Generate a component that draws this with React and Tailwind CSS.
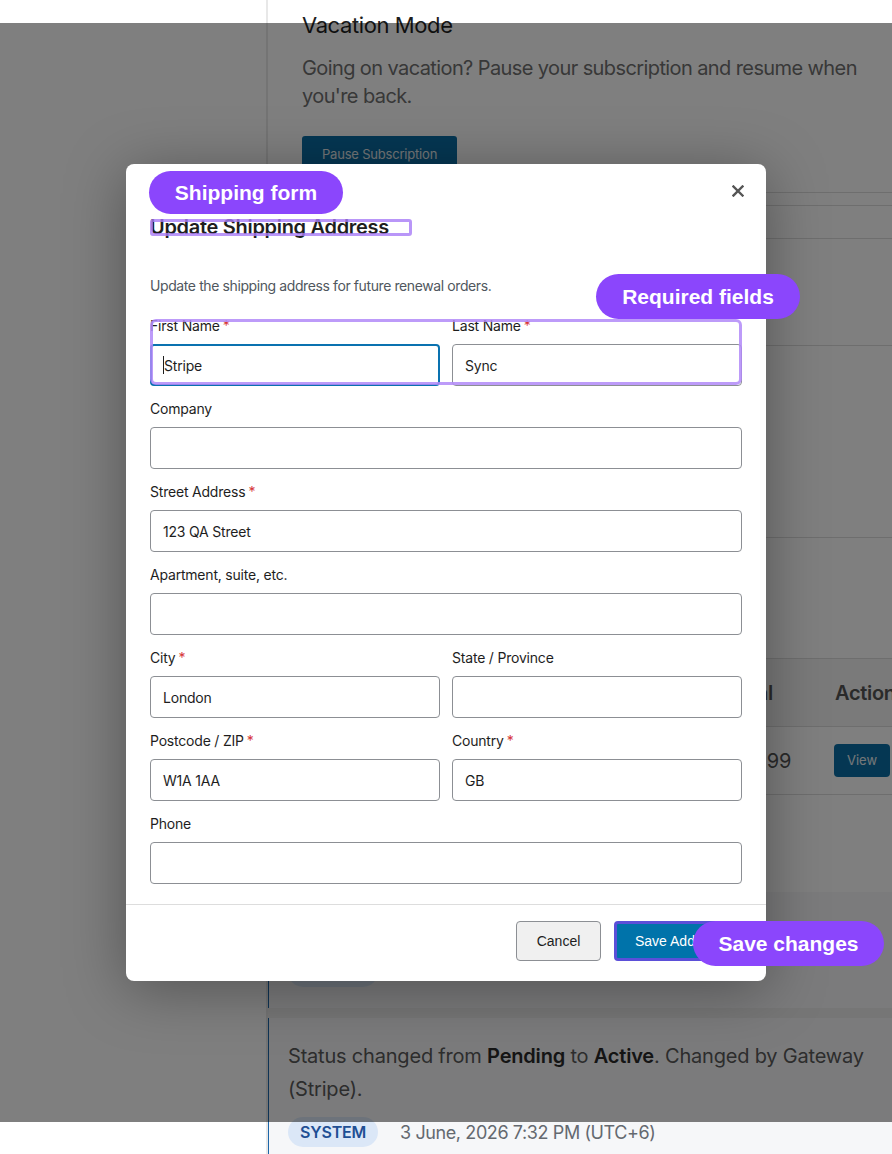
import React from "react";

function Field({ label, required, value, focused, wide }) {
  return (
    <div className={wide ? "col-span-2" : ""}>
      <div className="text-[14px] leading-[21px] text-[#1e1e1e] mb-2 tracking-[-0.2px]">
        {label}
        {required ? <span className="text-[#d63638] ml-[3px]">*</span> : null}
      </div>
      {focused ? (
        <div className="h-[42px] rounded-[4px] border-2 border-[#0a72b0] flex items-center px-[11px] text-[14px] text-[#1e1e1e] tracking-[-0.2px]">
          <span className="inline-block w-px h-[18px] bg-[#1e1e1e]" />
          <span>{value}</span>
        </div>
      ) : (
        <div className="h-[42px] rounded-[4px] border border-[#8c8f94] flex items-center px-3 text-[14px] text-[#1e1e1e] tracking-[-0.2px]">
          {value}
        </div>
      )}
    </div>
  );
}

function Chip() {
  return (
    <span className="inline-flex items-center h-[30px] px-[12px] rounded-[15px] bg-[#dbe7f7] text-[#1f4f94] text-[16px] font-semibold tracking-[-0.2px]">
      SYSTEM
    </span>
  );
}

export default function App() {
  return (
    <div className="relative w-[892px] h-[1154px] overflow-hidden bg-white font-['Inter',sans-serif]">
      {/* Page underneath */}
      <div className="flex h-full">
        <aside className="w-[266px] shrink-0 bg-white" />
        <main className="flex-1 min-w-0 border-l-2 border-[#e8e8e8] bg-white flex flex-col overflow-hidden">
          <section className="h-[193px] shrink-0 pl-[34px] pr-[16px] pt-[12px] border-b border-[#dcdcdc]">
            <h2 className="text-[22px] leading-[26px] text-[#1e1e1e] tracking-[-0.4px]">Vacation Mode</h2>
            <p className="mt-[16px] text-[20px] leading-[28px] text-[#707070] tracking-[-0.6px]">
              Going on vacation? Pause your subscription and resume when you're back.
            </p>
            <button className="mt-[26px] h-[40px] px-[20px] pb-[3px] rounded-[3px] bg-[#0b6fa6] text-[#e8eef2] text-[13px] tracking-[-0.2px]">
              Pause Subscription
            </button>
          </section>
          <div className="h-[13px] shrink-0 border-b border-[#dcdcdc]" />
          <div className="h-[33px] shrink-0 border-b border-[#dcdcdc]" />
          <div className="h-[107px] shrink-0 border-b border-[#dcdcdc]" />
          <div className="h-[192px] shrink-0 border-b border-[#dcdcdc]" />
          <div className="h-[121px] shrink-0 border-b border-[#dcdcdc]" />
          <div className="h-[68px] shrink-0 flex items-center border-b border-[#dcdcdc] bg-[#f4f4f4] whitespace-nowrap">
            <div className="w-[505px] shrink-0 text-right text-[20px] font-semibold text-[#555] tracking-[-0.3px]">Total</div>
            <div className="shrink-0 pl-[62px] text-[20px] font-semibold text-[#555] tracking-[-0.3px]">Actions</div>
          </div>
          <div className="h-[68px] shrink-0 flex items-center border-b border-[#dcdcdc] whitespace-nowrap">
            <div className="w-[523px] shrink-0 text-right text-[20px] text-[#555] tracking-[-0.3px]">$29.99</div>
            <div className="shrink-0 pl-[43px]">
              <button className="h-[33px] px-[13px] rounded-[4px] bg-[#0b6fa6] text-[#e8eef2] text-[13px]">View</button>
            </div>
          </div>
          <div className="h-[97px] shrink-0" />
          <div className="flex-1 bg-[#ececec] -ml-[2px] flex flex-col gap-[10px]">
            <div className="h-[116px] shrink-0 bg-[#f6f7f9] border-l-[3px] border-[#1d66a8] pl-[19px] pb-[21px] flex flex-col justify-end">
              <div className="flex items-center gap-[22px]">
                <Chip />
              </div>
            </div>
            <div className="flex-1 bg-[#f6f7f9] border-l-[3px] border-[#1d66a8] pl-[19px] pr-[20px] pt-[22px]">
              <p className="text-[20px] leading-[33px] text-[#5a5a5a] tracking-[-0.2px]">
                Status changed from <span className="font-semibold text-[#2a2a2a]">Pending</span> to{" "}
                <span className="font-semibold text-[#2a2a2a]">Active</span>. Changed by Gateway (Stripe).
              </p>
              <div className="mt-[11px] flex items-center gap-[22px]">
                <Chip />
                <span className="text-[18px] text-[#646970] tracking-[-0.4px]">3 June, 2026 7:32 PM (UTC+6)</span>
              </div>
            </div>
          </div>
        </main>
      </div>

      {/* Overlay */}
      <div className="absolute left-0 top-[23px] w-full h-[1099px] bg-black/50" />

      {/* Modal */}
      <div className="absolute left-[126px] top-[164px] w-[640px] h-[817px] bg-white rounded-[8px] shadow-[0_8px_60px_rgba(0,0,0,0.35)] flex flex-col">
        <button className="absolute right-[22px] top-[21px] w-[12px] h-[12px] flex items-center justify-center" aria-label="Close">
          <svg width="12" height="12" viewBox="0 0 12 12">
            <path d="M1.5 1.5L10.5 10.5M10.5 1.5L1.5 10.5" stroke="#555" strokeWidth="2.4" strokeLinecap="square" />
          </svg>
        </button>
        <div className="px-6 pt-[51px]">
          <h3 className="text-[20px] leading-[24px] font-semibold text-[#1e1e1e] tracking-[-0.3px]">Update Shipping Address</h3>
          <p className="mt-[37px] text-[14px] leading-[20px] text-[#50575e] tracking-[-0.4px]">
            Update the shipping address for future renewal orders.
          </p>
          <div className="mt-[19px] grid grid-cols-2 gap-x-3 gap-y-3">
            <Field label="First Name" required value="Stripe" focused />
            <Field label="Last Name" required value="Sync" />
            <Field label="Company" value="" wide />
            <Field label="Street Address" required value="123 QA Street" wide />
            <Field label="Apartment, suite, etc." value="" wide />
            <Field label="City" required value="London" />
            <Field label="State / Province" value="" />
            <Field label="Postcode / ZIP" required value="W1A 1AA" />
            <Field label="Country" required value="GB" />
            <Field label="Phone" value="" wide />
          </div>
        </div>
        <div className="mt-[20px] border-t border-[#dddddd] px-6 pt-4 pb-5 flex justify-end gap-[13px] font-['Liberation_Sans',Arial,sans-serif]">
          <button className="h-[40px] w-[85px] rounded-[4px] border border-[#8c8f94] bg-[#f0f0f0] text-[14px] text-[#1e1e1e]">
            Cancel
          </button>
          <button className="h-[40px] w-[128px] rounded-[4px] border-[3px] border-[#5b4fd8] bg-[#0073aa] text-[14px] text-white text-left pl-[18px] whitespace-nowrap overflow-hidden">
            Save Address
          </button>
        </div>

        {/* annotation outlines */}
        <div className="absolute left-[24px] top-[55px] w-[262px] h-[17px] rounded-[3px] border-[3px] border-[#a77cf6]/80" />
        <div className="absolute left-[24px] top-[155px] w-[592px] h-[66px] rounded-[6px] border-[3px] border-[#b18af8]/85" />
      </div>

      {/* annotation pills */}
      <div className="absolute left-[149px] top-[171px] w-[194px] h-[43px] rounded-full bg-[#8b46fc] flex items-center justify-center text-white text-[21px] font-bold font-['Liberation_Sans',Arial,sans-serif]">
        Shipping form
      </div>
      <div className="absolute left-[596px] top-[274px] w-[204px] h-[45px] rounded-full bg-[#8b46fc] flex items-center justify-center text-white text-[21px] font-bold font-['Liberation_Sans',Arial,sans-serif]">
        Required fields
      </div>
      <div className="absolute left-[693px] top-[921px] w-[191px] h-[45px] rounded-full bg-[#8b46fc] flex items-center justify-center text-white text-[21px] font-bold font-['Liberation_Sans',Arial,sans-serif]">
        Save changes
      </div>
    </div>
  );
}
